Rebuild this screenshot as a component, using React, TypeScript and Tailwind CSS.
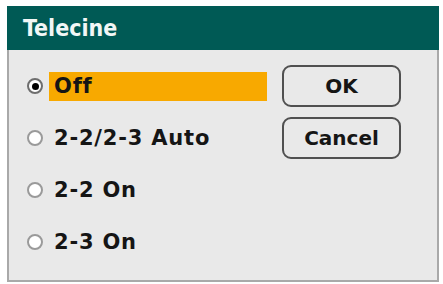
import React from "react";

const options = ["Off", "2-2/2-3 Auto", "2-2 On", "2-3 On"];

const Radio = ({ checked }: { checked: boolean }) => (
  <span
    className={`flex h-[16px] w-[16px] shrink-0 items-center justify-center rounded-full border-2 bg-white ${
      checked ? "border-[#6e6e6e]" : "border-[#9a9a9a]"
    }`}
  >
    {checked && <span className="h-[7px] w-[7px] rounded-full bg-black" />}
  </span>
);

const App = () => {
  const selected = 0;
  return (
    <div className="h-[284px] w-[443px] bg-white pl-[7px] pt-[6px]" style={{ fontFamily: '"DejaVu Sans", "Liberation Sans", sans-serif' }}>
      <div className="flex h-[276px] w-[432px] flex-col">
        <div className="flex h-[44px] items-center bg-[#005a55] pl-[16px]">
          <span
            className="text-[23px] font-bold leading-none text-[#f2f7f6]"
            style={{ fontFamily: '"DejaVu Sans Condensed", "DejaVu Sans", sans-serif', fontStretch: "condensed" }}
          >
            Telecine
          </span>
        </div>
        <div className="flex flex-1 border-x-2 border-b-2 border-[#a9a9a9] bg-[#e9e9e9]">
          <div className="flex flex-col pt-[10px] pl-[18px]">
            {options.map((label, i) => (
              <div key={label} className="flex h-[52px] items-center gap-[6px]">
                <Radio checked={i === selected} />
                <div
                  className={`flex h-[29px] w-[218px] items-center pl-[5px] text-[21px] font-bold leading-none tracking-[0.8px] text-[#151515] ${
                    i === selected ? "bg-[#f8a900]" : ""
                  }`}
                >
                  {label}
                </div>
              </div>
            ))}
          </div>
          <div className="ml-[15px] flex flex-col gap-[10px] pt-[15px]">
            <button className="flex h-[42px] w-[119px] items-center justify-center rounded-[9px] border-2 border-[#505050] bg-[#e9e9e9] text-[20px] font-bold leading-none text-[#151515]">
              OK
            </button>
            <button className="flex h-[42px] w-[119px] items-center justify-center rounded-[9px] border-2 border-[#505050] bg-[#e9e9e9] text-[20px] font-bold leading-none text-[#151515]">
              Cancel
            </button>
          </div>
        </div>
      </div>
    </div>
  );
};

export default App;
